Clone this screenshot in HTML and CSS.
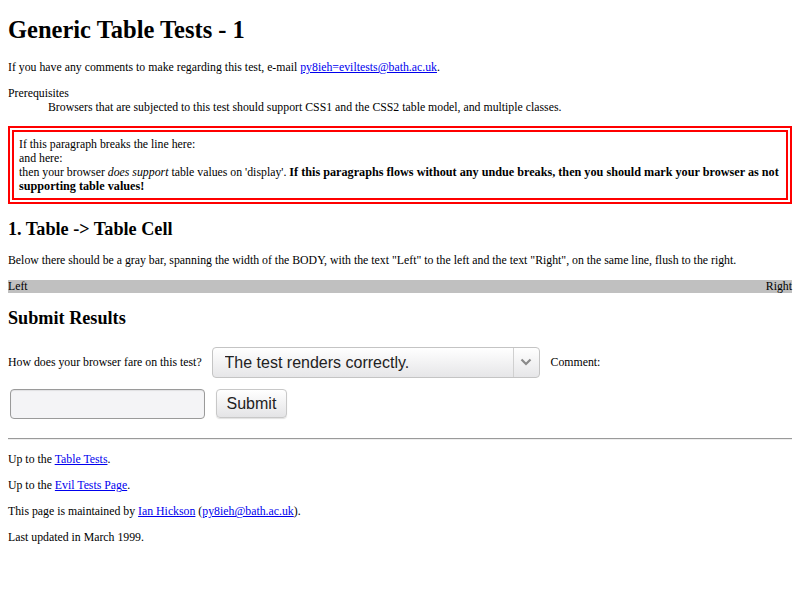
FILE: index.html
```html
<!DOCTYPE html>
<html>
<head>
<meta charset="utf-8">
<title>Generic Table Tests - 1</title>
<link rel="stylesheet" href="styles.css">
</head>
<body>
<h1 class="title">Generic Table Tests - 1</h1>
<p>If you have any comments to make regarding this test, e-mail <a href="#">py8ieh=eviltests@bath.ac.uk</a>.</p>
<dl class="prereq">
  <dt>Prerequisites</dt>
  <dd>Browsers that are subjected to this test should support CSS1 and the CSS2 table model, and multiple classes.</dd>
</dl>
<div class="warning">
  <div>If this paragraph breaks the line here:</div>
  <div>and here:</div>
  <div>then your browser <em>does support</em> table values on 'display'. <strong>If this paragraphs flows without any undue breaks, then you should mark your browser as not supporting table values!</strong></div>
</div>
<h2 class="section first">1. Table -&gt; Table Cell</h2>
<p>Below there should be a gray bar, spanning the width of the BODY, with the text "Left" to the left and the text "Right", on the same line, flush to the right.</p>
<div class="bar"><span>Left</span><span>Right</span></div>
<h2 class="section">Submit Results</h2>
<form class="results">
  <span class="q">How does your browser fare on this test?</span>
  <span class="select-wrap">
    <select class="select"><option>The test renders correctly.</option></select>
    <span class="select-arrow"><svg width="14" height="10" viewBox="0 0 14 10"><path d="M2.5 2.5 L7 7 L11.5 2.5" fill="none" stroke="#8a8a8a" stroke-width="2.2"/></svg></span>
  </span>
  <span class="q comment">Comment:</span>
  <input class="text" type="text">
  <button class="submit" type="button">Submit</button>
</form>
<hr class="rule">
<p>Up to the <a href="#">Table Tests</a>.</p>
<p>Up to the <a href="#">Evil Tests Page</a>.</p>
<p>This page is maintained by <a href="#">Ian Hickson</a> (<a href="#">py8ieh@bath.ac.uk</a>).</p>
<p>Last updated in March 1999.</p>
</body>
</html>
```

FILE: styles.css
```css
html { background: #fff; }
body {
  margin: 0;
  padding: 8px;
  font-family: "Liberation Serif", "Times New Roman", serif;
  font-size: 11.8px;
  line-height: 14px;
  color: #000;
}
a { color: #0000ee; }
.title {
  font-size: 24.5px;
  line-height: 28px;
  margin: 8px 0 16px;
  font-weight: bold;
}
p { margin: 12px 0; }
.prereq { margin: 12px 0; }
.prereq dd { margin-left: 40px; }
.warning {
  border: 6px double #ff0000;
  padding: 5px;
  margin: 0;
}
.warning strong { font-size: 12.2px; }
.section {
  font-size: 18.2px;
  line-height: 21px;
  margin: 15px 0;
  font-weight: bold;
}
.section.first { margin-bottom: 13px; }
.bar {
  display: flex;
  justify-content: space-between;
  background: #c0c0c0;
  line-height: 13px;
  margin: 13px 0 15px;
}
.results { margin: -3px 0 16px; line-height: 40px; }
.q { vertical-align: middle; }
.select-wrap {
  position: relative;
  display: inline-block;
  vertical-align: middle;
  margin: 0 6px 0 7px;
}
.select {
  appearance: none;
  -webkit-appearance: none;
  width: 328px;
  height: 31px;
  margin: 0;
  padding: 0 40px 0 12px;
  border: 1px solid #c4c4c4;
  border-radius: 4px;
  background: linear-gradient(#ffffff, #e6e6e8);
  font-family: "Liberation Sans", Arial, sans-serif;
  font-size: 16px;
  color: #222;
  display: block;
}
.select-arrow {
  position: absolute;
  right: 1px;
  top: 1px;
  bottom: 1px;
  width: 25px;
  border-left: 1px solid #d0d0d0;
  display: flex;
  align-items: center;
  justify-content: center;
  pointer-events: none;
}
.comment { margin-left: 2px; }
.text {
  vertical-align: middle;
  width: 195px;
  height: 30px;
  box-sizing: border-box;
  margin: 0 2px;
  border: 1px solid #9a9a9a;
  border-radius: 4px;
  background: #f4f4f6;
  box-shadow: inset 0 1px 1px rgba(0,0,0,0.08);
}
.submit {
  vertical-align: middle;
  height: 29px;
  width: 71px;
  margin: 0 0 0 6px;
  border: 1px solid #c8c8c8;
  border-radius: 4px;
  background: linear-gradient(#ffffff, #e4e4e6);
  box-shadow: 0 1px 1px rgba(0,0,0,0.12);
  font-family: "Liberation Sans", Arial, sans-serif;
  font-size: 16px;
  color: #222;
  padding: 0;
}
.rule {
  margin: 6px 0;
  border: 0;
  border-top: 1px solid #9a9a9a;
  border-bottom: 1px solid #eee;
}
```
